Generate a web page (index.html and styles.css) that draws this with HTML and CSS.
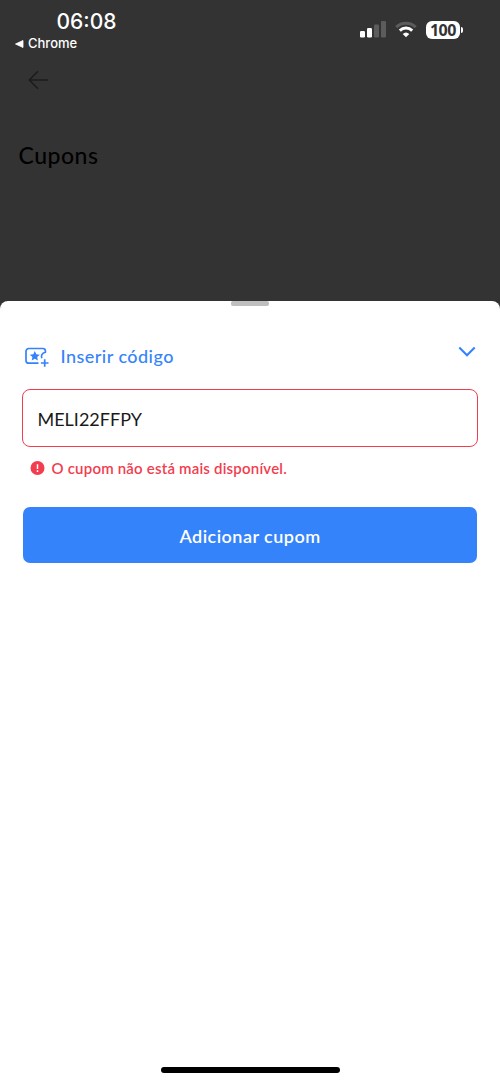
FILE: index.html
```html
<!DOCTYPE html>
<html lang="pt-BR">
<head>
    <meta charset="UTF-8">
    <meta name="viewport" content="width=device-width, initial-scale=1.0">
    <title>Cupons</title>
    <link rel="stylesheet" href="styles.css">
</head>
<body>
    <!-- Dimmed page behind the sheet -->
    <div class="page">
        <div class="status-bar">
            <div class="status-left">
                <div class="time">06:08</div>
                <div class="back-app">
                    <svg width="9" height="8" viewBox="0 0 9 8"><path d="M.5 4 8 .5v7z" fill="#fff" stroke="#fff" stroke-width=".8" stroke-linejoin="round"/></svg>
                    <span>Chrome</span>
                </div>
            </div>
            <div class="status-right">
                <svg class="signal" width="26" height="17" viewBox="0 0 26 17">
                    <rect x="0" y="10" width="5" height="6.5" rx="1.2" fill="#fff"/>
                    <rect x="7" y="7" width="5" height="9.5" rx="1.2" fill="#fff"/>
                    <rect x="14" y="3.5" width="5" height="13" rx="1.2" fill="#5c5c5c"/>
                    <rect x="21" y="0" width="5" height="16.5" rx="1.2" fill="#5c5c5c"/>
                </svg>
                <svg class="wifi" width="22" height="17" viewBox="0 0 22 17" fill="none" stroke-width="3">
                    <path d="M1.3 6.2a14 14 0 0 1 19.4 0" stroke="#5c5c5c"/>
                    <path d="M4.8 9.6a9 9 0 0 1 12.4 0" stroke="#fff"/>
                    <path d="M11 16.2 7.7 13a4.8 4.8 0 0 1 6.6 0z" fill="#fff"/>
                </svg>
                <div class="battery">100</div>
                <div class="battery-tip"></div>
            </div>
        </div>
        <svg class="back-arrow" width="22" height="20" viewBox="0 0 22 20" fill="none" stroke="#1c1c1c" stroke-width="1.5"><path d="M20 10H1.5M10 1.2 1.2 10l8.8 8.8"/></svg>
        <h1>Cupons</h1>
    </div>

    <!-- Bottom sheet -->
    <div class="sheet">
        <div class="handle"></div>
        <div class="sheet-header">
            <svg class="coupon" width="25" height="21" viewBox="0 0 25 21" fill="none" stroke="#3483fa" stroke-width="1.7">
                <path d="M13.5 16.2H3.8A2.8 2.8 0 0 1 1 13.4V4.3a2.8 2.8 0 0 1 2.8-2.8h14a2.6 2.6 0 0 1 2.6 2.6v1.1c-3.6 1-4.6 3.4-3.6 6"/>
                <path d="M19.7 12.2v7.6M15.9 16h7.6"/>
                <path d="m9.8 4.1 1.5 3.2 3.5.4-2.6 2.4.7 3.5-3.1-1.8-3.1 1.8.7-3.5-2.6-2.4 3.5-.4z" fill="#3483fa" stroke="none"/>
            </svg>
            <h2>Inserir código</h2>
            <svg class="chevron" width="18" height="12" viewBox="0 0 18 12" fill="none" stroke="#3483fa" stroke-width="2.1"><path d="m1.3 1.5 7.7 7.7 7.7-7.7"/></svg>
        </div>
        <form>
            <input type="text" class="code" value="MELI22FFPY" aria-label="Código">
            <div class="error">
                <svg width="15" height="15" viewBox="0 0 15 15"><circle cx="7.5" cy="7" r="7" fill="#f23d4f"/><path d="M7.5 3.2V8M7.5 9.3v1.6" stroke="#fff" stroke-width="1.5"/></svg>
                <span>O cupom não está mais disponível.</span>
            </div>
            <button type="button"><span>Adicionar cupom</span></button>
        </form>
        <div class="home-bar"></div>
    </div>
</body>
</html>
```

FILE: styles.css
```css
* {
    box-sizing: border-box;
}

body {
    margin: 0;
    height: 1082px;
    display: flex;
    flex-direction: column;
    font-family: Lato, sans-serif;
    background-color: #333;
}

svg {
    display: block;
    flex: none;
}

/* Dimmed page */
.page {
    height: 301px;
    flex: none;
}

.status-bar {
    height: 70px;
    display: flex;
    justify-content: space-between;
    padding: 9px 37px 0 15px;
    color: #fff;
    font-family: Inter, sans-serif;
}

.time {
    padding-left: 41.5px;
    font-size: 21px;
    line-height: 25px;
    font-weight: 500;
}

.back-app {
    display: flex;
    align-items: center;
    gap: 4px;
    margin-top: 1px;
    font-size: 13px;
    line-height: 17px;
    font-weight: 500;
}

.status-right {
    display: flex;
    align-items: center;
    height: 41px;
}

.wifi {
    margin-left: 9px;
}

.battery {
    width: 34px;
    height: 18px;
    margin-left: 9px;
    border-radius: 6px;
    background-color: #fff;
    color: #333;
    font-family: "Open Sans", sans-serif;
    font-size: 16px;
    line-height: 18px;
    font-weight: 700;
    letter-spacing: -0.4px;
    text-align: center;
}

.battery-tip {
    width: 2px;
    height: 6px;
    margin-left: 1px;
    border-radius: 0 2px 2px 0;
    background-color: #fff;
}

.back-arrow {
    margin-left: 27.5px;
}

h1 {
    margin: 51px 0 0 18.5px;
    color: #000;
    font-size: 23px;
    line-height: 28px;
    font-weight: 500;
    letter-spacing: 0.5px;
}

/* Bottom sheet */
.sheet {
    flex: 1;
    display: flex;
    flex-direction: column;
    border-radius: 8px 8px 0 0;
    background-color: #fff;
}

.handle {
    width: 38px;
    height: 5px;
    margin: 0 auto;
    border-radius: 2px;
    background-color: #bfbfbf;
}

.sheet-header {
    display: flex;
    align-items: center;
    height: 24px;
    margin-top: 38px;
    padding: 0 24px 0 25px;
}

.coupon {
    margin-top: 2px;
}

h2 {
    flex: 1;
    margin: 0 0 0 10.5px;
    color: #3483fa;
    font-size: 18px;
    line-height: 24px;
    font-weight: 500;
    letter-spacing: 0.47px;
}

.chevron {
    margin-top: -8px;
}

form {
    padding: 0 22px;
    margin-top: 21px;
}

.code {
    display: block;
    width: 100%;
    height: 58px;
    padding: 2px 14.5px 0;
    border: 1.4px solid #f23d4f;
    border-radius: 8px;
    outline: none;
    background-color: #fff;
    color: #1a1a1a;
    font-family: inherit;
    font-size: 18px;
}

.error {
    display: flex;
    align-items: center;
    gap: 6.5px;
    height: 20px;
    margin: 11px 0 0 8px;
    color: #f23d4f;
    font-size: 15px;
    line-height: 20px;
    font-weight: 600;
    letter-spacing: 0.2px;
}

button {
    display: block;
    width: 454px;
    height: 56px;
    margin: 29px auto 0;
    padding-top: 3px;
    border: none;
    border-radius: 7px;
    background-color: #3483fa;
    color: #fff;
    font-family: inherit;
    font-size: 18px;
    font-weight: 600;
    letter-spacing: 0.47px;
}

.home-bar {
    width: 179px;
    height: 6px;
    margin: auto auto 9px;
    border-radius: 3px;
    background-color: #000;
}
```
